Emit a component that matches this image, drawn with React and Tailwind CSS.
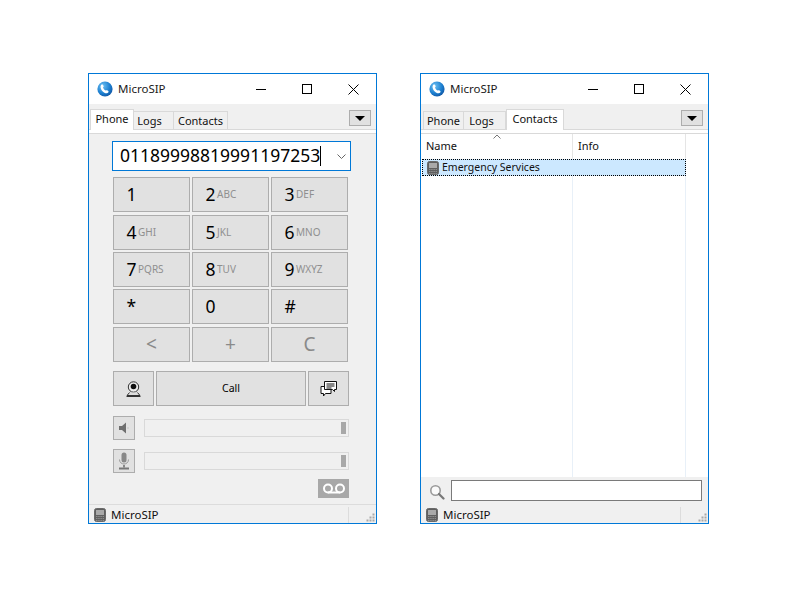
import React from 'react';

const Logo = () => (
  <svg width="16" height="16" viewBox="0 0 16 16" className="shrink-0">
    <defs>
      <radialGradient id="lg" cx="35%" cy="30%" r="80%">
        <stop offset="0%" stopColor="#6cc0f2" />
        <stop offset="60%" stopColor="#1c7fd0" />
        <stop offset="100%" stopColor="#0f4f9c" />
      </radialGradient>
    </defs>
    <circle cx="8" cy="8" r="7.6" fill="url(#lg)" />
    <path d="M4.6 3.6c1-.5 1.6.2 2 1.3.2.6-.1 1-.6 1.4.3 1.4 1.3 2.7 2.7 3.3.5-.4 1-.6 1.5-.3 1 .5 1.7 1.1 1.2 2-.7 1.2-2.2 1.3-3.6.7C5.7 11 3.9 8.8 3.6 6.5c-.1-1.2.2-2.4 1-2.9z" fill="#fff" />
  </svg>
);

const DeviceIcon = () => (
  <svg width="12" height="14" viewBox="0 0 12 14" className="shrink-0">
    <rect x="0.5" y="0.5" width="11" height="13" rx="2" fill="#5f5f5f" stroke="#6a6a6a" />
    <rect x="2" y="2" width="8" height="5" fill="#a9a9a9" />
    <path d="M2 8.5h8M2 10.5h8M2 12.5h8" stroke="#8e8e8e" strokeDasharray="1.5 .7" />
  </svg>
);

const WebcamIcon = () => (
  <svg width="15" height="16" viewBox="0 0 15 16">
    <circle cx="7.5" cy="6" r="5.2" fill="#eee" stroke="#333" />
    <circle cx="7.5" cy="5.5" r="2.8" fill="#111" />
    <path d="M3.5 11.5 1 14.5h13l-2.5-3" fill="#ddd" stroke="#333" />
    <path d="M.5 15.5h14" stroke="#333" />
  </svg>
);

const ChatIcon = () => (
  <svg width="17" height="16" viewBox="0 0 17 16">
    <path d="M1 5.5h10v7H5.5L3.5 15v-2.5H1z" fill="#fff" stroke="#111" />
    <path d="M4.5 .5h12v8h-2v2l-2-2H4.5z" fill="#fff" stroke="#111" />
    <path d="M6.5 3h8M6.5 5h8M6.5 7h5" stroke="#111" />
  </svg>
);

const SpeakerIcon = () => (
  <svg width="12" height="12" viewBox="0 0 12 12">
    <path d="M1 4h3l4-3.5v11L4 8H1z" fill="#6e6e6e" />
    <path d="M10 5.500v1" stroke="#aaa" />
  </svg>
);

const MicIcon = () => (
  <svg width="12" height="18" viewBox="0 0 12 18">
    <rect x="3.5" y="0.5" width="5" height="10" rx="2.5" fill="#888" />
    <path d="M1.5 7.5c0 6 9 6 9 0" fill="none" stroke="#999" />
    <path d="M6 13v2.5" stroke="#888" strokeWidth="2" />
    <path d="M1 16.5h10" stroke="#777" strokeWidth="2" />
  </svg>
);

const VoicemailIcon = () => (
  <svg width="24" height="11" viewBox="0 0 24 11" fill="none" stroke="#fff" strokeWidth="2">
    <circle cx="6" cy="5.5" r="4" />
    <circle cx="18" cy="5.5" r="4" />
    <path d="M6 9.5h12" />
  </svg>
);

const SearchIcon = () => (
  <svg width="16" height="16" viewBox="0 0 16 16" fill="none">
    <circle cx="6.5" cy="6.5" r="4.7" stroke="#9a9a9a" strokeWidth="1.6" fill="#fafafa" />
    <path d="M10 10l4.5 4.5" stroke="#777" strokeWidth="2.2" strokeLinecap="round" />
  </svg>
);

const Grip = () => (
  <svg width="9" height="9" viewBox="0 0 9 9" fill="#a8a8a8">
    <rect x="6.5" y="0.5" width="2" height="2" />
    <rect x="3.5" y="3.5" width="2" height="2" />
    <rect x="6.5" y="3.5" width="2" height="2" />
    <rect x="0.5" y="6.5" width="2" height="2" />
    <rect x="3.5" y="6.5" width="2" height="2" />
    <rect x="6.5" y="6.5" width="2" height="2" />
  </svg>
);

const TitleBar = () => (
  <div className="h-[30px] bg-white flex items-center pl-[8px] shrink-0">
    <Logo />
    <span className="ml-[5px] text-[11.5px] text-[#1a1a1a]">MicroSIP</span>
    <div className="ml-auto flex items-center">
      <div className="w-[46px] h-[30px] flex items-center justify-center">
        <div className="w-[10px] h-px bg-black" />
      </div>
      <div className="w-[46px] h-[30px] flex items-center justify-center">
        <div className="w-[10px] h-[10px] border border-black" />
      </div>
      <div className="w-[46px] h-[30px] flex items-center justify-center">
        <svg width="11" height="11" viewBox="0 0 11 11" stroke="#000" fill="none">
          <path d="M.5.5l10 10M10.5.5l-10 10" />
        </svg>
      </div>
    </div>
  </div>
);

const Tabs = ({ active }) => {
  const onPhone = active === 'Phone';
  const items = onPhone
    ? [
        { name: 'Phone', w: 'w-[44px]' },
        { name: 'Logs', w: 'w-[40px] pr-[8px]' },
        { name: 'Contacts', w: 'w-[54px]' },
      ]
    : [
        { name: 'Phone', w: 'w-[41px]' },
        { name: 'Logs', w: 'w-[42px] pr-[6px]' },
        { name: 'Contacts', w: 'w-[58px]' },
      ];
  return (
    <div className="shrink-0">
      <div className={`h-[26px] bg-[#f0f0f0] border-b border-[#d9d9d9] flex items-end relative ${onPhone ? 'pl-[1px]' : 'pl-[2px]'}`}>
        {items.map((t) =>
          t.name === active ? (
            <div
              key={t.name}
              className={`${t.w} h-[21px] -mb-px bg-white border border-b-0 border-[#d9d9d9] text-[11px] text-center leading-[18px] text-[#111] z-10`}
            >
              {t.name}
            </div>
          ) : (
            <div
              key={t.name}
              className={`${t.w} h-[18px] bg-[#f0f0f0] border border-b-0 border-l-0 first:border-l border-[#d9d9d9] text-[11px] text-center leading-[18px] text-[#111]`}
            >
              {t.name}
            </div>
          ),
        )}
        <div className="absolute right-[5px] top-[6px] w-[22px] h-[16px] bg-[#e1e1e1] border border-[#adadad] flex items-center justify-center">
          <div className="w-0 h-0 border-x-[5px] border-x-transparent border-t-[5px] border-t-black" />
        </div>
      </div>
      <div className="h-[3px] bg-white border-b border-[#d9d9d9] box-content" />
    </div>
  );
};

const StatusBar = ({ line }) => (
  <div className={`h-[19px] bg-[#f0f0f0] flex items-center shrink-0 ${line ? 'border-t border-[#dcdcdc] pt-[1px]' : 'pt-[2px]'}`}>
    <div className="ml-[5px] flex items-center">
      <DeviceIcon />
      <span className="ml-[5px] text-[11.5px] text-[#111]">MicroSIP</span>
    </div>
    <div className="ml-auto w-px h-[16px] bg-[#dcdcdc]" />
    <div className="w-[27px] flex justify-end items-end h-full pr-px pb-px">
      <Grip />
    </div>
  </div>
);

const keys = [
  [['1', ''], ['2', 'ABC'], ['3', 'DEF']],
  [['4', 'GHI'], ['5', 'JKL'], ['6', 'MNO']],
  [['7', 'PQRS'], ['8', 'TUV'], ['9', 'WXYZ']],
  [['*', ''], ['0', ''], ['#', '']],
];

const Key = ({ main, sub }) => (
  <div className="h-[35px] w-[77px] bg-[#e1e1e1] border border-[#adadad] flex items-center pl-[12.5px]">
    <span className="text-[17.5px] leading-none text-black">{main}</span>
    {sub && <span className="ml-[1.5px] text-[10px] text-[#8f8f8f]">{sub}</span>}
  </div>
);

const Slider = () => (
  <div className="h-[18px] w-[205px] bg-[#f0f0f0] border border-[#d9d9d9] flex items-center justify-end pr-[2px] ml-[9px]">
    <div className="w-[5px] h-[12px] bg-[#a8a8a8]" />
  </div>
);

const PhoneWindow = () => (
  <div className="w-[289px] h-[451px] border border-[#0078d7] flex flex-col bg-[#f0f0f0] overflow-hidden">
    <TitleBar />
    <Tabs active="Phone" />
    <div className="flex-1 flex flex-col pl-[24px]">
      <div className="mt-[7px] -ml-px w-[239px] h-[30px] bg-white border-[1.5px] border-[#0078d7] flex items-center pl-[7px]">
        <span className="text-[17.5px] text-black leading-none">01189998819991197253</span>
        <span className="w-px h-[20px] bg-black" />
        <svg width="9" height="5" viewBox="0 0 9 5" className="ml-auto mr-[4px]" fill="none" stroke="#666">
          <path d="M.5.5 4.5 4.5 8.5.5" />
        </svg>
      </div>
      <div className="mt-[6px] flex flex-col gap-[2px]">
        {keys.map((row, i) => (
          <div key={i} className={`flex gap-[2px] ${i === 0 ? 'mb-px' : ''}`}>
            {row.map(([m, s]) => (
              <Key key={m} main={m} sub={s} />
            ))}
          </div>
        ))}
        <div className="flex gap-[2px] mt-px">
          {['<', '+', 'C'].map((k) => (
            <div key={k} className="h-[35px] w-[77px] bg-[#e1e1e1] border border-[#adadad] flex items-center justify-center text-[19px] text-[#8a8a8a]">
              {k}
            </div>
          ))}
        </div>
      </div>
      <div className="mt-[9px] flex gap-[2px]">
        <div className="w-[41px] h-[35px] bg-[#e1e1e1] border border-[#adadad] flex items-center justify-center">
          <WebcamIcon />
        </div>
        <div className="w-[150px] h-[35px] bg-[#e1e1e1] border border-[#adadad] flex items-center justify-center text-[10.5px] text-black">
          Call
        </div>
        <div className="w-[41px] h-[35px] bg-[#e1e1e1] border border-[#adadad] flex items-center justify-center">
          <ChatIcon />
        </div>
      </div>
      <div className="mt-[10px] flex items-center">
        <div className="w-[22px] h-[24px] bg-[#e1e1e1] border border-[#adadad] flex items-center justify-center">
          <SpeakerIcon />
        </div>
        <Slider />
      </div>
      <div className="mt-[9px] flex items-center">
        <div className="w-[22px] h-[24px] bg-[#e1e1e1] border border-[#adadad] flex items-center justify-center">
          <MicIcon />
        </div>
        <Slider />
      </div>
      <div className="mt-[6px] ml-[205px] w-[31px] h-[19px] bg-[#a8a8a8] flex items-center justify-center">
        <VoicemailIcon />
      </div>
    </div>
    <StatusBar line />
  </div>
);

const ContactsWindow = () => (
  <div className="w-[289px] h-[451px] border border-[#0078d7] flex flex-col bg-[#f0f0f0] overflow-hidden">
    <TitleBar />
    <Tabs active="Contacts" />
    <div className="flex-1 bg-white flex flex-col relative">
      <div className="h-[24px] flex text-[11px] text-[#111] shrink-0">
        <div className="w-[152px] border-r border-[#e5e5e5] pl-[5px] leading-[24px] relative">
          Name
          <svg width="8" height="5" viewBox="0 0 8 5" fill="none" stroke="#777" className="absolute left-[72px] top-0">
            <path d="M.5 4.5 4 1l3.5 3.5" />
          </svg>
        </div>
        <div className="w-[113px] border-r border-[#e5e5e5] pl-[5px] leading-[24px]">Info</div>
      </div>
      <div className="flex-1 flex relative">
        <div className="w-[152px] border-r border-[#e8f0f8]" />
        <div className="w-[113px] border-r border-[#e8f0f8]" />
        <div className="absolute left-[1px] top-[1px] w-[264px] h-[17px] bg-[#cce8ff] border border-dotted border-black flex items-center pl-[4px] text-[10.5px] text-[#111]">
          <DeviceIcon />
          <span className="ml-[3px]">Emergency Services</span>
        </div>
      </div>
    </div>
    <div className="h-[27px] bg-[#f0f0f0] flex items-start pl-[8px] pt-[3px] shrink-0">
      <div className="mt-[4px]">
        <SearchIcon />
      </div>
      <div className="ml-[6px] w-[251px] h-[21px] bg-white border border-[#7a7a7a]" />
    </div>
    <StatusBar />
  </div>
);

const App = () => {
  return (
    <div className="w-[800px] h-[600px] bg-white flex items-start gap-[43px] pl-[88px] pt-[73px] font-['Noto_Sans',sans-serif]">
      <PhoneWindow />
      <ContactsWindow />
    </div>
  );
};

export default App;
